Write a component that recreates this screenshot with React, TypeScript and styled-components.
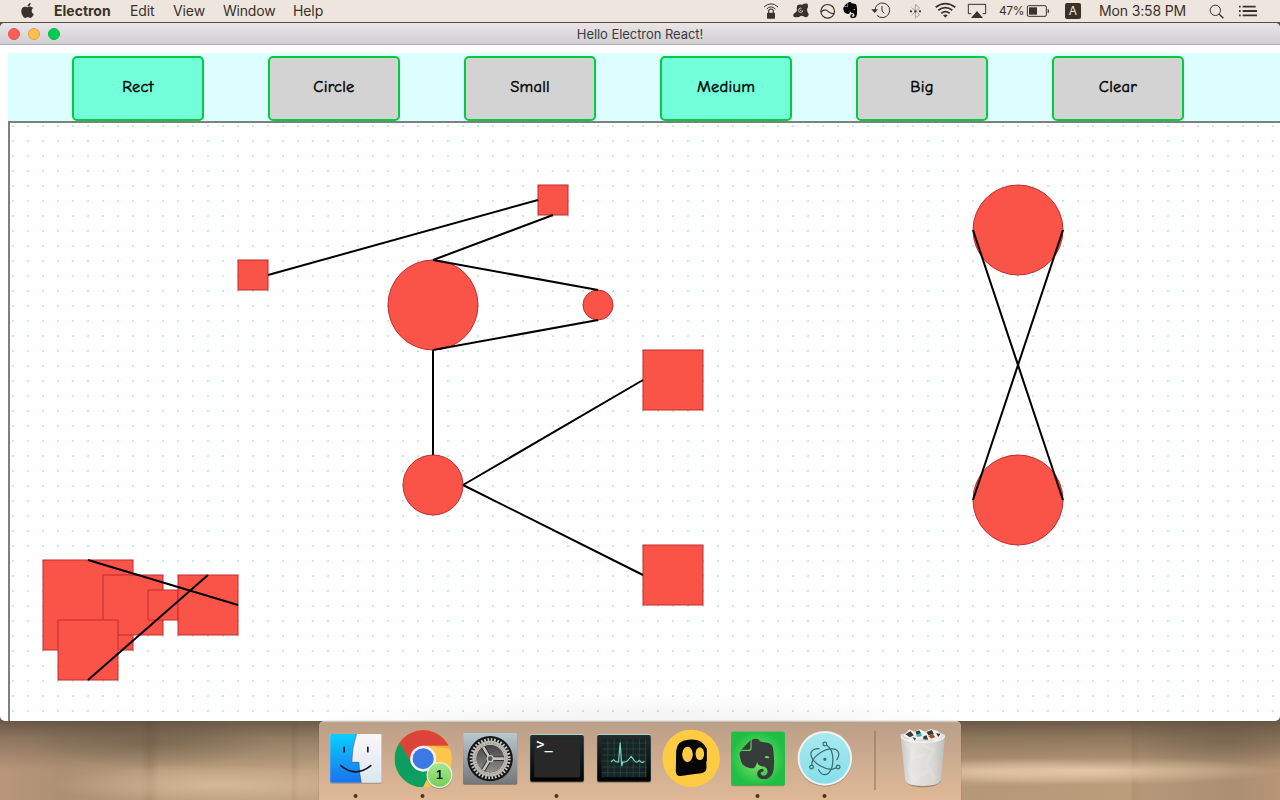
import React from "react";
import styled, { createGlobalStyle } from "styled-components";
import { FaApple } from "react-icons/fa";
import { SiEvernote } from "react-icons/si";

const GlobalStyle = createGlobalStyle`
  *, *::before, *::after { box-sizing: border-box; }
  html, body { margin: 0; padding: 0; overflow: hidden; }
  body { font-family: Inter, "Liberation Sans", sans-serif; }
  svg { display: block; flex: none; }
`;

const Desktop = styled.div`
  width: 1280px;
  height: 800px;
  display: flex;
  flex-direction: column;
  overflow: hidden;
  background-color: #a58a6c;
  background-image:
    linear-gradient(180deg, rgba(60, 48, 38, 0.62) 721px, rgba(80, 68, 52, 0.4) 738px, rgba(80, 68, 52, 0.1) 762px, rgba(80, 68, 52, 0) 770px),
    radial-gradient(170px 20px at 220px 785px, rgba(222, 194, 160, 0.75), transparent),
    radial-gradient(190px 14px at 1090px 771px, rgba(230, 202, 170, 0.9), transparent),
    radial-gradient(150px 14px at 1000px 772px, rgba(226, 197, 164, 0.8), transparent),
    radial-gradient(120px 26px at 150px 742px, rgba(92, 78, 60, 0.4), transparent),
    radial-gradient(110px 22px at 1225px 742px, rgba(104, 88, 68, 0.35), transparent),
    linear-gradient(90deg, #b8967a 0, #ad9074 60px, #b29779 140px, #a88a6d 150px, #b79b7b 160px, #bda080 290px, #b39575 294px, #bea282 300px, #b59878 960px, #bb9d7c 1130px, #b3926f 1133px, #b59878 1140px, #ab8f71 1235px, #b79576 1280px);
`;

const MenuBar = styled.header`
  height: 23px;
  flex: none;
  display: flex;
  align-items: flex-start;
  background: #eee6de;
  border-bottom: 1px solid #5d4c3b;
  color: #3a3129;
`;

const AppleMark = styled.div`
  width: 54px;
  height: 22px;
  padding: 2px 0 0 19px;
`;

const MenuItem = styled.span<{ $width: number; $bold?: boolean; $tracking?: string }>`
  width: ${(p) => p.$width}px;
  flex: none;
  font-size: 14px;
  line-height: 22px;
  white-space: nowrap;
  font-weight: ${(p) => (p.$bold ? 700 : 400)};
  letter-spacing: ${(p) => p.$tracking ?? "-0.1px"};
`;

const StatusArea = styled.div`
  display: flex;
  margin-left: auto;
`;

const Battery = styled.span`
  width: 25px;
  font-size: 12px;
  line-height: 22px;
  letter-spacing: -0.4px;
  white-space: nowrap;
`;

const InputSource = styled.span`
  width: 16px;
  height: 16px;
  margin: 3px 18px 0 15px;
  border-radius: 2px;
  background: #3a3129;
  color: #eee6de;
  font-size: 12px;
  line-height: 16px;
  text-align: center;
`;

const Window = styled.main`
  height: 698px;
  flex: none;
  display: flex;
  flex-direction: column;
  overflow: hidden;
  border-radius: 5px;
  background: #fff;
`;

const TitleBar = styled.div`
  height: 22px;
  flex: none;
  display: grid;
  grid-template-columns: 100px 1fr 100px;
  align-items: center;
  background: linear-gradient(#e9e6e9, #d1cfd1);
  border-bottom: 1px solid #b1afb1;
`;

const Lights = styled.div`
  display: flex;
  gap: 8px;
  padding-left: 8px;
`;

const Light = styled.i<{ $fill: string; $edge: string }>`
  width: 12px;
  height: 12px;
  border-radius: 50%;
  background: ${(p) => p.$fill};
  border: 1px solid ${(p) => p.$edge};
`;

const Title = styled.h1`
  margin: 0;
  padding-top: 1px;
  text-align: center;
  font-size: 13px;
  line-height: 20px;
  font-weight: 400;
  letter-spacing: -0.06px;
  color: #3c3a3c;
`;

const Page = styled.div`
  flex: 1;
  padding: 8px 0 0 8px;
  display: flex;
  flex-direction: column;
`;

const Toolbar = styled.nav`
  height: 68px;
  flex: none;
  display: flex;
  gap: 64px;
  padding: 3px 0 0 64px;
  background: #dcfeff;
`;

const ToolButton = styled.button<{ $active?: boolean }>`
  width: 132px;
  height: 65px;
  padding: 0 0 4px;
  border: 2px solid #00cc3e;
  border-radius: 5px;
  background: ${(p) => (p.$active ? "#73ffd9" : "#d3d3d3")};
  color: #000;
  font: 400 16.5px "Comic Sans MS", "Comic Neue", "Open Sans", sans-serif;
  letter-spacing: 0.25px;
  -webkit-text-stroke: 0.45px #000;
`;

const Board = styled.section`
  flex: 1;
  border: solid #7f7f7f;
  border-width: 2px 0 0 2px;
`;

const DockRow = styled.footer`
  flex: 1;
  display: flex;
  justify-content: center;
`;

const Dock = styled.div`
  width: 642px;
  height: 79px;
  display: flex;
  padding-left: 3px;
  border-top: 1px solid #cbc9c4;
  border-radius: 5px 5px 0 0;
  background: linear-gradient(#bb9f88, #dfb997);
  box-shadow: 0 0 1px rgba(50, 35, 20, 0.7);
`;

const INK = "#3a3129";

/* Status glyphs are drawn on a 3x grid, 66 units high. */
const Glyph = ({ x, w, children }: { x: number; w: number; children: React.ReactNode }) => (
  <svg width={w / 3} height={22} viewBox={`${x} 0 ${w} 66`} fill="none" stroke={INK} strokeWidth={3.5}>
    {children}
  </svg>
);

const DockSlot = ({ x, w = 201, running, children }: { x: number; w?: number; running?: boolean; children: React.ReactNode }) => (
  <svg width={w / 3} height={78} viewBox={`${x} 6 ${w} 234`}>
    {children}
    {running && <circle cx={x + 100.5} cy={228} r={6} fill="#54300f" />}
  </svg>
);

type Shape = { kind: "rect" | "circle"; x: number; y: number; size: number };

const shapes: Shape[] = [
  { kind: "rect", x: 238, y: 260, size: 30 },
  { kind: "rect", x: 538, y: 185, size: 30 },
  { kind: "circle", x: 388, y: 260, size: 90 },
  { kind: "circle", x: 583, y: 290, size: 30 },
  { kind: "circle", x: 403, y: 455, size: 60 },
  { kind: "rect", x: 643, y: 350, size: 60 },
  { kind: "rect", x: 643, y: 545, size: 60 },
  { kind: "circle", x: 973, y: 185, size: 90 },
  { kind: "circle", x: 973, y: 455, size: 90 },
  { kind: "rect", x: 43, y: 560, size: 90 },
  { kind: "rect", x: 103, y: 575, size: 60 },
  { kind: "rect", x: 148, y: 590, size: 30 },
  { kind: "rect", x: 178, y: 575, size: 60 },
  { kind: "rect", x: 58, y: 620, size: 60 },
];

const links = [
  [268, 275, 538, 200],
  [553, 215, 433, 260],
  [433, 260, 598, 290],
  [433, 350, 598, 320],
  [433, 350, 433, 455],
  [463, 485, 643, 380],
  [463, 485, 643, 575],
  [973, 230, 1063, 500],
  [1063, 230, 973, 500],
  [88, 560, 238, 605],
  [208, 575, 88, 680],
];

const Diagram = () => (
  <svg width={1270} height={598} viewBox="10 123 1270 598">
    <defs>
      <pattern id="dots" x={12} y={125} width={15} height={15} patternUnits="userSpaceOnUse">
        <rect width={2} height={2} fill="#ccf5d8" />
        <rect x={1} width={1} height={1} fill="#b8efc8" />
        <rect y={1} width={1} height={1} fill="#b8efc8" />
      </pattern>
      <radialGradient id="haze">
        <stop offset="0.5" stopColor="#000" stopOpacity={0.04} />
        <stop offset="1" stopColor="#000" stopOpacity={0} />
      </radialGradient>
    </defs>
    <rect x={10} y={123} width={1270} height={598} fill="url(#dots)" />
    <ellipse cx={640} cy={735} rx={365} ry={42} fill="url(#haze)" />
    <g fill="#fa5449" stroke="#c22a31" strokeWidth={1}>
      {shapes.map((s, i) =>
        s.kind === "rect" ? (
          <rect key={i} x={s.x} y={s.y} width={s.size} height={s.size} />
        ) : (
          <circle key={i} cx={s.x + s.size / 2} cy={s.y + s.size / 2} r={s.size / 2} />
        )
      )}
    </g>
    <g stroke="#000" strokeWidth={2}>
      {links.map(([x1, y1, x2, y2], i) => (
        <line key={i} x1={x1} y1={y1} x2={x2} y2={y2} />
      ))}
    </g>
  </svg>
);

const StatusIcons = () => (
  <>
    <Glyph x={60} w={81}>
      <path d="M72 21Q93 2 114 21M80 27Q93 14 106 27" strokeWidth={3} />
      <path d="M86 39V34a7 7 0 0 1 14 0V39" />
      <rect x={81} y={38} width={24} height={18} rx={2} fill={INK} stroke="none" />
    </Glyph>
    <Glyph x={141} w={84}>
      <path d="M172 16Q178 12 186 14Q194 9 203 11Q206 20 201 28Q201 35 206 42Q206 52 196 52Q190 48 184 47Q174 54 162 51Q157 45 163 40Q170 37 171 31Q169 22 172 16Z" fill={INK} stroke="none" />
      <circle cx={182} cy={31} r={6.5} stroke="#eee6de" strokeWidth={2.5} strokeDasharray="30 11" />
      <circle cx={182} cy={31} r={2} fill="#eee6de" stroke="none" />
    </Glyph>
    <Glyph x={225} w={75}>
      <circle cx={263} cy={34} r={20.5} />
      <path d="M243 36Q254 25 264 34T283 40" />
    </Glyph>
    <Glyph x={300} w={75}>
      <SiEvernote x={306} y={6} size={49} color="#050505" stroke="none" />
    </Glyph>
    <Glyph x={375} w={114}>
      <path d="M405 32A22 22 0 1 1 411 46" strokeWidth={3} />
      <path d="M394 28H414L404 39Z" fill={INK} stroke="none" />
      <path d="M426 18V33L433 40" strokeWidth={3} />
    </Glyph>
    <Glyph x={489} w={81}>
      <path d="M515 23L539 44L526 54V13L539 24L515 45" stroke="#aaa198" strokeWidth={3} />
      <g fill={INK} stroke="none">
        <circle cx={513} cy={34} r={3.4} />
        <circle cx={526} cy={34} r={3.4} />
        <circle cx={540} cy={34} r={3.4} />
      </g>
    </Glyph>
    <Glyph x={570} w={96}>
      <g strokeWidth={5.4}>
        <path d="M587 22Q616 0 646 22" />
        <path d="M595 31Q616 15 637 31" />
        <path d="M604 40Q616 30 629 40" />
      </g>
      <path d="M609 46Q616 41 623 46L616 53Z" fill={INK} stroke="none" />
    </Glyph>
    <Glyph x={666} w={111}>
      <path d="M694 41H685V13H737V41H728" strokeWidth={3} />
      <path d="M711 33L729 54H693Z" fill={INK} stroke="none" />
    </Glyph>
  </>
);

const DockDefs = () => (
  <defs>
    <linearGradient id="finderBlue" x2="0" y2="1"><stop stopColor="#08d0ff" /><stop offset="1" stopColor="#1a72ee" /></linearGradient>
    <linearGradient id="finderWhite" x2="0" y2="1"><stop stopColor="#faf7f8" /><stop offset="1" stopColor="#dbe7f2" /></linearGradient>
  </defs>
);

const DockIcons = () => (
  <>
    <DockSlot x={7.5} running>
      <DockDefs />
      <rect x={32} y={44} width={154} height={147} rx={4} fill="#6c5a4c" opacity={0.4} />
      <rect x={32} y={42} width={154} height={146} rx={4} fill="url(#finderWhite)" />
      <path d="M36 42H111Q97 82 97 127H118Q120 160 125 188H36Q32 188 32 184V46Q32 42 36 42Z" fill="url(#finderBlue)" />
      <path d="M111 42Q97 82 97 127H118Q120 160 125 188" fill="none" stroke="#1b3550" strokeWidth={1.5} />
      <path d="M74 82V95M145 82V95" stroke="#111a28" strokeWidth={5} strokeLinecap="round" />
      <path d="M64 137Q108 174 154 137" fill="none" stroke="#101722" strokeWidth={5} strokeLinecap="round" />
    </DockSlot>

    <DockSlot x={208.5} running>
      <defs>
        <clipPath id="chromeDisc"><circle cx={311} cy={116} r={86} /></clipPath>
        <linearGradient id="badge" x2="0" y2="1"><stop stopColor="#a6e68c" /><stop offset="1" stopColor="#75d05a" /></linearGradient>
      </defs>
      <g clipPath="url(#chromeDisc)">
        <rect x={225} y={30} width={172} height={172} fill="#fdc64b" />
        <path d="M225 30V202H311L344 135L311 116L239 67Z" fill="#0c9f60" />
        <path d="M311 202L345 136L370 202Z" fill="#fdc64b" />
        <path d="M225 30H400V77H311L276 130L239 67Z" fill="#dc4439" />
        <path d="M311 77H397V88Q350 78 311 77Z" fill="#d99c35" opacity={0.55} />
      </g>
      <circle cx={311} cy={116} r={39} fill="#f4f3f2" />
      <circle cx={311} cy={116} r={31.5} fill="#3c79e4" />
      <circle cx={360} cy={168} r={39} fill="#5d5040" opacity={0.4} />
      <circle cx={360} cy={165} r={39} fill="#e9f3df" />
      <circle cx={360} cy={165} r={35} fill="url(#badge)" />
      <text x={360} y={178} textAnchor="middle" fontFamily='"Liberation Sans", sans-serif' fontSize={37} fontWeight={700} fill="#111">1</text>
    </DockSlot>

    <DockSlot x={409.5}>
      <defs>
        <linearGradient id="steel" x2="0" y2="1"><stop stopColor="#b7c9d2" /><stop offset="1" stopColor="#737779" /></linearGradient>
        <linearGradient id="gearFace" x2="0" y2="1"><stop stopColor="#444" /><stop offset="1" stopColor="#8d8d8d" /></linearGradient>
      </defs>
      <rect x={431} y={41} width={162} height={153} rx={4} fill="#4b4036" opacity={0.6} />
      <rect x={431} y={39} width={162} height={152} rx={4} fill="url(#steel)" />
      <circle cx={512} cy={116} r={68} fill="#161616" />
      <circle cx={512} cy={116} r={57} fill="none" stroke="#c9c7c2" strokeWidth={9} strokeDasharray="5.2 4.75" />
      <circle cx={512} cy={116} r={47} fill="none" stroke="#bab8b3" strokeWidth={13} />
      <circle cx={512} cy={116} r={46} fill="none" stroke="#4a4a4a" strokeWidth={2} strokeDasharray="2 6" />
      <circle cx={512} cy={116} r={41} fill="url(#gearFace)" />
      <path d="M512 116H553M512 116L491 81M512 116L491 151" stroke="#222" strokeWidth={13} />
      <path d="M512 116H553M512 116L491 81M512 116L491 151" stroke="#c7c4bf" strokeWidth={8} />
      <circle cx={512} cy={116} r={11} fill="#c7c4bf" />
      <circle cx={512} cy={116} r={7} fill="#555" />
    </DockSlot>

    <DockSlot x={10.5} running>
      <defs>
        <linearGradient id="bezel" x2="0" y2="1"><stop stopColor="#242c2c" /><stop offset="1" stopColor="#020202" /></linearGradient>
      </defs>
      <rect x={31} y={44} width={163} height={144} rx={6} fill="#69594a" opacity={0.6} />
      <rect x={31} y={42} width={163} height={143} rx={6} fill="#afd1d2" />
      <rect x={32} y={45} width={161} height={140} rx={5} fill="url(#bezel)" />
      <rect x={44} y={55} width={138} height={117} fill="#282828" />
      <text x={50} y={88} fontFamily='"DejaVu Sans Mono", "Liberation Mono", monospace' fontSize={41} fontWeight={700} fill="#f3f3f3">&gt;_</text>
    </DockSlot>

    <DockSlot x={211.5}>
      <rect x={232} y={44} width={163} height={144} rx={6} fill="#69594a" opacity={0.6} />
      <rect x={232} y={42} width={163} height={143} rx={6} fill="#afd1d2" />
      <rect x={233} y={45} width={161} height={140} rx={5} fill="url(#bezel)" />
      <rect x={246} y={57} width={136} height={114} fill="#162423" />
      <path d="M265 57V171M284 57V171M303 57V171M322 57V171M341 57V171M360 57V171M378 57V171M246 69H382M246 87H382M246 105H382M246 123H382M246 141H382M246 158H382" stroke="#34605b" strokeWidth={1.4} />
      <path d="M274 126L282 119L289 125L297 126L302 68L307 138L310 126Q321 128 326 120L335 109L344 121Q350 132 359 121L367 128L375 125" fill="none" stroke="#79d5c6" strokeWidth={3.5} />
    </DockSlot>

    <DockSlot x={412.5}>
      <circle cx={515} cy={115} r={86} fill="#ffcb43" />
      <path d="M470 92Q473 61 506 59Q551 55 559 86L561 141Q562 157 545 160Q505 165 483 168Q468 169 469 150Z" fill="#050505" />
      <ellipse cx={504} cy={103} rx={16} ry={23} fill="#ffcb43" />
      <ellipse cx={541} cy={101} rx={13} ry={19} fill="#ffcb43" />
      <path d="M554 75L562 86V125L555 115Z" fill="#050505" />
    </DockSlot>

    <DockSlot x={13.5} running>
      <defs>
        <radialGradient id="leaf"><stop stopColor="#8ce568" /><stop offset="1" stopColor="#1fbf46" /></radialGradient>
      </defs>
      <rect x={35} y={38} width={161} height={161} rx={6} fill="#4d6038" opacity={0.5} />
      <rect x={35} y={35} width={161} height={161} rx={6} fill="#2bc653" />
      <rect x={35} y={35} width={161} height={161} rx={6} fill="url(#leaf)" />
      <SiEvernote x={51} y={56} size={122} color="#363c3a" />
    </DockSlot>

    <DockSlot x={214.5} running>
      <defs>
        <linearGradient id="sky" x2="0" y2="1"><stop stopColor="#a9e9ef" /><stop offset="1" stopColor="#87dfe9" /></linearGradient>
      </defs>
      <circle cx={316} cy={118} r={82} fill="#67584a" opacity={0.4} />
      <circle cx={316} cy={115} r={82} fill="#f3f1ef" />
      <circle cx={316} cy={115} r={76} fill="url(#sky)" />
      <g fill="none" stroke="#386c73" strokeWidth={3.6} strokeLinecap="round">
        {[0, 120, 240].map((turn) => (
          <g key={turn} transform={`rotate(${turn} 316 118)`}>
            <circle cx={316} cy={72} r={5.5} />
            <path d="M322 76C334 84 340 102 340 119C340 136 336 148 331 154M334 149C326 168 308 170 297 149" />
          </g>
        ))}
        <circle cx={316} cy={118} r={3} fill="#386c73" />
      </g>
    </DockSlot>

    <DockSlot x={415.5} w={306}>
      <defs>
        <linearGradient id="can"><stop stopColor="#c7c7c5" /><stop offset="0.25" stopColor="#e7e6e4" /><stop offset="0.75" stopColor="#d8d6d3" /><stop offset="1" stopColor="#bcbcb9" /></linearGradient>
      </defs>
      <path d="M466.5 33V210" stroke="#8b6f57" strokeWidth={3} />
      <path d="M557 181Q565 202 610 202Q658 202 666 181Z" fill="#67584a" opacity={0.5} />
      <path d="M543 42H677L664 181Q659 198 610 198Q562 198 557 181Z" fill="url(#can)" />
      <ellipse cx={610} cy={48} rx={67} ry={14} fill="#d9dad8" />
      <path d="M552 47L570 28L586 36L600 27L617 36L633 27L655 33L670 47L650 63L611 56L578 64Z" fill="#f0efec" />
      <path d="M558 43L573 34L583 46L571 52ZM588 35L599 31L606 42L592 45ZM621 36L637 30L643 42L627 46ZM650 39L663 42L656 51ZM612 49L621 46L626 59L611 58Z" fill="#37393a" />
      <path d="M589 45L604 39L608 48L594 51Z" fill="#38bcc1" />
      <path d="M626 48L640 42L647 51L636 56Z" fill="#a94728" />
      <path d="M579 51L590 55L585 62Z" fill="#4d5677" />
      <path d="M545 50Q555 66 610 67Q665 66 675 50" fill="none" stroke="#f5f4f2" strokeWidth={4} />
      <path d="M557 70L582 94L566 152L592 184M606 73L642 91L619 132L647 177M577 114L620 104M598 170L635 145" fill="none" stroke="#f3f1ef" strokeWidth={9} opacity={0.2} />
    </DockSlot>
  </>
);

const tools = [
  { label: "Rect", active: true },
  { label: "Circle" },
  { label: "Small" },
  { label: "Medium", active: true },
  { label: "Big" },
  { label: "Clear" },
];

export default function App() {
  return (
    <>
      <GlobalStyle />
      <Desktop>
        <MenuBar>
          <AppleMark><FaApple size={17} /></AppleMark>
          <MenuItem $width={76} $bold $tracking="0">Electron</MenuItem>
          <MenuItem $width={43}>Edit</MenuItem>
          <MenuItem $width={50}>View</MenuItem>
          <MenuItem $width={70} $tracking="-0.2px">Window</MenuItem>
          <MenuItem $width={40}>Help</MenuItem>
          <StatusArea>
            <StatusIcons />
            <Battery>47%</Battery>
            <Glyph x={72} w={78}>
              <rect x={82} y={17} width={57} height={32} rx={4} strokeWidth={3} />
              <rect x={87} y={22} width={24} height={22} fill={INK} stroke="none" />
              <path d="M144 28Q149 33 144 39Z" fill={INK} stroke={INK} strokeWidth={2} />
            </Glyph>
            <InputSource>A</InputSource>
            <MenuItem $width={101} $tracking="-0.15px">Mon 3:58 PM</MenuItem>
            <Glyph x={600} w={96}>
              <circle cx={646} cy={31} r={15.5} strokeWidth={3} />
              <path d="M657 42L670 55" strokeWidth={4} />
            </Glyph>
            <Glyph x={696} w={144}>
              <path d="M717 20H722M717 33H722M717 46H722M728 20H767M728 33H771M728 46H771" strokeWidth={5.4} />
            </Glyph>
          </StatusArea>
        </MenuBar>
        <Window>
          <TitleBar>
            <Lights>
              <Light $fill="#ff5f5c" $edge="#e9504d" />
              <Light $fill="#ffbe4f" $edge="#e2a23c" />
              <Light $fill="#00cc56" $edge="#0fb44a" />
            </Lights>
            <Title>Hello Electron React!</Title>
          </TitleBar>
          <Page>
            <Toolbar>
              {tools.map((t) => (
                <ToolButton key={t.label} $active={t.active}>{t.label}</ToolButton>
              ))}
            </Toolbar>
            <Board><Diagram /></Board>
          </Page>
        </Window>
        <DockRow>
          <Dock><DockIcons /></Dock>
        </DockRow>
      </Desktop>
    </>
  );
}
